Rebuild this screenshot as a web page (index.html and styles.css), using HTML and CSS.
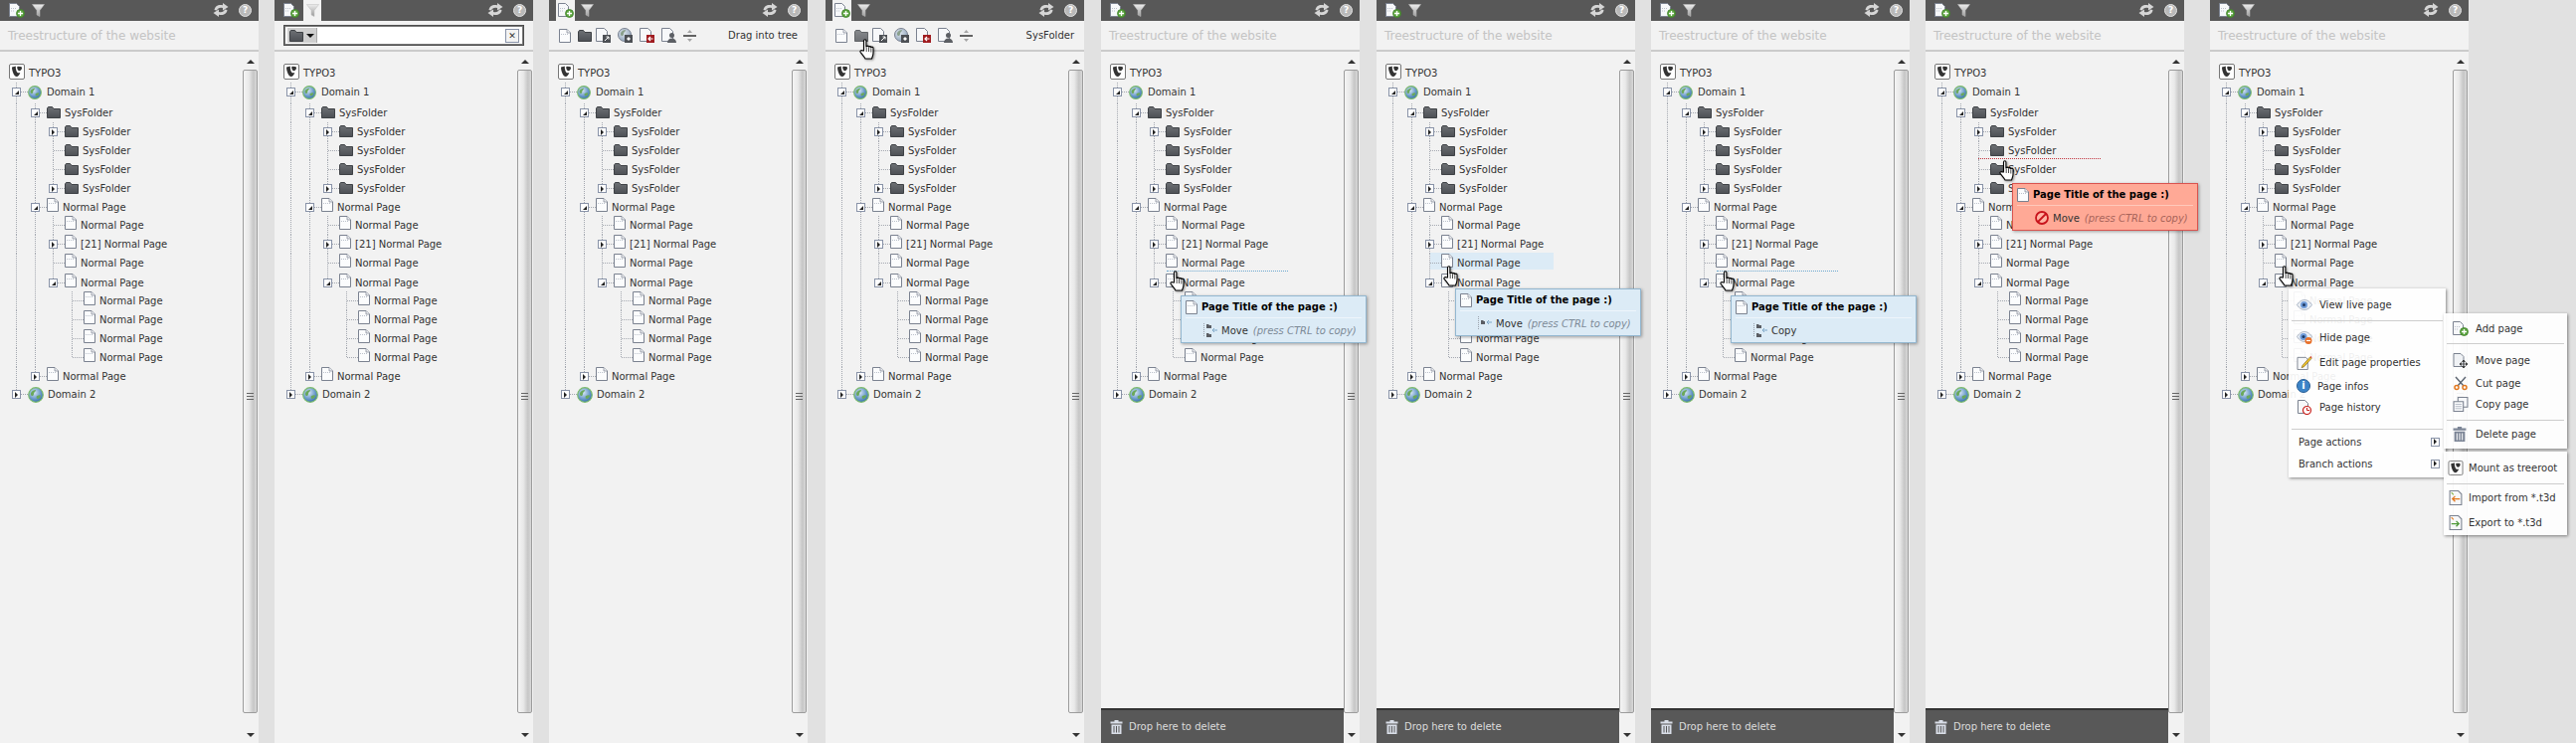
FILE: index.html
```html
<!DOCTYPE html>
<html lang="en">
<head>
    <meta charset="UTF-8">
    <title>Page tree states</title>
    <link rel="stylesheet" href="styles.css">
</head>
<body>
    <svg class="defs" xmlns="http://www.w3.org/2000/svg">
        <defs>
            <linearGradient id="g-folder" x1="0" y1="0" x2="0" y2="1"><stop offset="0" stop-color="#6e7175"/><stop offset="1" stop-color="#4d5055"/></linearGradient>
            <linearGradient id="g-filter" x1="0" y1="0" x2="0" y2="1"><stop offset="0" stop-color="#ededed"/><stop offset="1" stop-color="#9a9a9a"/></linearGradient>
            <radialGradient id="g-globe" cx=".4" cy=".35" r=".7"><stop offset="0" stop-color="#d7e6f3"/><stop offset=".6" stop-color="#6d9ccb"/><stop offset="1" stop-color="#2f6aa8"/></radialGradient>
            <radialGradient id="g-globe-dim" cx=".4" cy=".35" r=".7"><stop offset="0" stop-color="#dfe6ee"/><stop offset="1" stop-color="#8ea3ba"/></radialGradient>
        </defs>
        <symbol id="i-page" viewBox="0 0 12 14"><path d="M.5.5h7.5l3.500 3.500v9.500H.5z" fill="#fbfcfd" stroke="#7b8290"/><path d="M8 .5V4h3.500" fill="#eef0f3" stroke="#7b8290" stroke-width=".7"/><path d="M2 5.500h7" stroke="#bcc2cc" stroke-dasharray="1 1"/></symbol>
        <symbol id="i-folder" viewBox="0 0 14 12"><path d="M.5 11.500V2L1.500.5h4L7 2.500h6.500v9z" fill="url(#g-folder)" stroke="#3f4246"/></symbol>
        <symbol id="i-globe" viewBox="0 0 16 16"><circle cx="8" cy="8" r="7.300" fill="url(#g-globe)" stroke="#7cbb6c" stroke-width="1.200"/><path d="M3 6c1-2 3-3 5-3 0 2-2 2-2 4s-2 3-3 1zM9 9c2-1 4-1 4 0s-2 3-3 3-2-2-1-3z" fill="#6aa85c"/></symbol>
        <symbol id="i-typo3" viewBox="0 0 16 16"><rect x=".5" y=".5" width="15" height="15" rx="1.500" fill="#fff" stroke="#777"/><path d="M3 3.500c0 3.500 2 9.500 4.700 9.500 1.600 0 3-2 3.600-4-.8.3-1.400.3-1.800.3C8 9.300 6.800 6 6.800 3.400c0-.5 0-.8.2-.9zM9 2.800c-.5.1-.8.4-.8 1.100 0 1.300 1.200 3.400 2.400 3.400.9 0 2.400-1.400 2.400-3 0-.8-.4-1.200-1-1.400z" fill="#333"/></symbol>
        <symbol id="i-add" viewBox="0 0 16 15"><path d="M.5.500h7l3 3v10H.5z" fill="#f7f8fa" stroke="#7b8290"/><path d="M2 5.500h6M2 8h4" stroke="#bcc2cc" stroke-dasharray="1 1"/><circle cx="11.500" cy="10.500" r="4" fill="#5da53f" stroke="#3d7f2a" stroke-width=".8"/><path d="M11.500 8v5M9 10.500h5" stroke="#fff" stroke-width="1.300"/></symbol>
        <symbol id="i-filter" viewBox="0 0 13 13"><path d="M.5.5h12L8 6.500v6L5 11V6.500z" fill="url(#g-filter)" stroke="#bdbdbd" stroke-width=".5"/></symbol>
        <symbol id="i-refresh" viewBox="0 0 16 14"><path d="M1.500 7C2 3 6 1 10 2.300V0l5.500 4L10 7.500V5C7 4.300 5 5 4 7.500zM14.500 7c-.5 4-4.500 6-8.500 4.700V14L.5 10 6 6.500V9c3 .7 5 0 6-2.500z" fill="#d6d6d6"/></symbol>
        <symbol id="i-trash" viewBox="0 0 13 14"><path d="M4.500 0h4v1.500h4v2H.5v-2h4z" fill="currentColor"/><path fill-rule="evenodd" d="M1.500 4.500h10V14h-10zM3.500 6v6.500h1V6zM6 6v6.500h1V6zM8.500 6v6.500h1V6z" fill="currentColor"/></symbol>
        <symbol id="i-link-page" viewBox="0 0 15 15"><path d="M.5.500h8l3 3v10H.5z" fill="#f7f8fa" stroke="#7b8290"/><rect x="7" y="7" width="8" height="8" fill="#4d5055"/><path d="M9 13l4-4M10.500 9H13v2.500" stroke="#fff" fill="none"/></symbol>
        <symbol id="i-link-globe" viewBox="0 0 15 15"><circle cx="7" cy="7" r="6.500" fill="url(#g-globe-dim)" stroke="#7b8290"/><path d="M3 5c1-2 3-3 5-3 0 2-2 2-2 4s-2 3-3 1z" fill="#8aa08c"/><rect x="7" y="7" width="8" height="8" fill="#4d5055"/><path d="M9 11l2-2 2 2-2 2z" fill="#fff"/></symbol>
        <symbol id="i-back-page" viewBox="0 0 15 15"><path d="M.5.500h8l3 3v10H.5z" fill="#f7f8fa" stroke="#7b8290"/><rect x="7" y="7" width="8" height="8" fill="#a01c20"/><path d="M13.500 11H9M11 9l-2 2 2 2" stroke="#fff" fill="none" stroke-width="1.200"/></symbol>
        <symbol id="i-user-page" viewBox="0 0 15 15"><path d="M.5.500h8l3 3v10H.5z" fill="#f7f8fa" stroke="#7b8290"/><circle cx="10.500" cy="7.500" r="2.500" fill="#5c5f64"/><path d="M6 15c0-3 2-4.500 4.500-4.500S15 12 15 15z" fill="#5c5f64"/></symbol>
        <symbol id="i-divider" viewBox="0 0 13 14"><path d="M0 7h13" stroke="#333" stroke-width="1.500"/><path d="M6.500 1l2.500 3H4zM6.500 13L9 10H4z" fill="#a5a5a5"/></symbol>
        <symbol id="i-hand" viewBox="0 0 16 21"><path d="M4.500 12V2a1.200 1.200 0 0 1 2.400 0v6h.3a1.200 1.200 0 0 1 2.300 0v.5a1.200 1.200 0 0 1 2.300 0v.7a1.100 1.100 0 0 1 2.200 0V14c0 3-1 4-1.500 6H6c-1-2-3-4-4.800-6.500-.8-1.200.8-2.600 2-1.500z" fill="#fff" stroke="#000" stroke-width="1.100"/><path d="M7.200 9v4M9.500 9v4M11.800 9.500v4" stroke="#000" stroke-width=".7"/></symbol>
        <symbol id="i-move-two" viewBox="0 0 14 14"><path d="M.5 0v14" stroke="#9aa0aa" stroke-dasharray="1 1"/><path d="M3 1h2l1 1h2v3H3zM3 10h2l1 1h2v3H3z" fill="#5a5d63"/><path d="M14 7H9M11 5L9 7l2 2" stroke="#7fa8c8" fill="none"/></symbol>
        <symbol id="i-move-one" viewBox="0 0 14 14"><path d="M.5 0v14" stroke="#9aa0aa" stroke-dasharray="1 1"/><path d="M3 4h2l1 1h1v3H3z" fill="#5a5d63"/><path d="M14 6H9M11 4L9 6l2 2" stroke="#7fa8c8" fill="none"/></symbol>
        <symbol id="i-deny" viewBox="0 0 14 14"><circle cx="7" cy="7" r="6" fill="#ffb5a4" stroke="#c8141c" stroke-width="1.800"/><path d="M3 11l8-8" stroke="#c8141c" stroke-width="1.800"/></symbol>
        <symbol id="i-eye" viewBox="0 0 16 12"><path d="M.5 6C3 2 6 1 8 1s5 1 7.500 5C13 10 10 11 8 11S3 10 .5 6z" fill="#e8edf4" stroke="#a8b2c2"/><circle cx="7.500" cy="6" r="3.500" fill="#6f9bd8"/><circle cx="7.500" cy="6" r="1.500" fill="#1f3a63"/></symbol>
        <symbol id="i-eye-hide" viewBox="0 0 16 14"><path d="M.5 6C3 2 6 1 8 1s5 1 7.500 5C13 10 10 11 8 11S3 10 .5 6z" fill="#e8edf4" stroke="#a8b2c2"/><circle cx="7" cy="6" r="3.500" fill="#6f9bd8"/><circle cx="7" cy="6" r="1.500" fill="#1f3a63"/><circle cx="12" cy="10" r="3.500" fill="#e8702a"/><path d="M10 10h4" stroke="#fff" stroke-width="1.200"/></symbol>
        <symbol id="i-edit" viewBox="0 0 16 16"><path d="M.5 2.500h9l2 2v11H.5z" fill="#f7f8fa" stroke="#7b8290"/><path d="M6 11l8-9 1.500 1.500-8 9L5 13.500z" fill="#f2c92e" stroke="#7a5a10" stroke-width=".7"/><path d="M14 2l1.500 1.500 .5-1L15 1z" fill="#d8352a"/></symbol>
        <symbol id="i-history" viewBox="0 0 14 15"><path d="M.5.500h7l3 3v10H.5z" fill="#f7f8fa" stroke="#7b8290"/><circle cx="9.500" cy="10.500" r="4" fill="#fff" stroke="#c8201c" stroke-width="1.200"/><path d="M9.500 8v2.500H12" stroke="#c8201c" fill="none"/></symbol>
        <symbol id="i-move-page" viewBox="0 0 15 15"><path d="M.5.500h7l3 3v10H.5z" fill="#f0f2f5" stroke="#7b8290"/><path d="M10.500 7v8M6.500 11h8M10.500 7L9 8.500h3zM10.500 15L9 13.500h3zM6.500 11L8 9.500v3zM14.500 11L13 9.500v3z" stroke="#333" stroke-width=".7" fill="#333"/></symbol>
        <symbol id="i-cut" viewBox="0 0 16 13"><path d="M3 0l8 9M13 0L5 9" stroke="#5c6470" stroke-width="1.400"/><circle cx="4" cy="10.500" r="2" fill="none" stroke="#e2781e" stroke-width="1.500"/><circle cx="12" cy="10.500" r="2" fill="none" stroke="#e2781e" stroke-width="1.500"/></symbol>
        <symbol id="i-copy" viewBox="0 0 14 14"><path d="M4.500.5h9v9h-9z" fill="#f7f8fa" stroke="#7b8290"/><path d="M.5 4.500h9v9h-9z" fill="#f7f8fa" stroke="#7b8290"/><path d="M2 7h6M2 9h6M2 11h6" stroke="#a8aebb" stroke-width=".7"/></symbol>
        <symbol id="i-import" viewBox="0 0 12 14"><path d="M.5.500h8l3 3v10H.5z" fill="#f7f8fa" stroke="#7b8290"/><path d="M10 8H3M5.500 5.500L3 8l2.500 2.500" stroke="#e2781e" fill="none" stroke-width="1.200"/><path d="M2 2l2 2" stroke="#7fae3c"/></symbol>
        <symbol id="i-export" viewBox="0 0 12 14"><path d="M.5.500h8l3 3v10H.5z" fill="#f7f8fa" stroke="#7b8290"/><path d="M2 8h7M6.500 5.500L9 8l-2.500 2.500" stroke="#4f9a3a" fill="none" stroke-width="1.200"/><path d="M2 2l2 2" stroke="#e2781e"/></symbol>
    </svg>

    <main class="board">
        <!-- default -->
        <section class="panel">
            <div class="topbar"></div>
            <div class="subbar"><span class="subbar-hint">Treestructure of the website</span></div>
            <div class="body"><div class="tree-col"><div class="tree"></div></div><div class="scroll"></div></div>
        </section>

        <!-- filter open -->
        <section class="panel" data-tab="filter">
            <div class="topbar"></div>
            <div class="subbar">
                <div class="search">
                    <span class="search-type"><svg class="i-search-folder"><use href="#i-folder"/></svg><span class="arrow-down"></span></span>
                    <span class="search-clear">&#x2715;</span>
                </div>
            </div>
            <div class="body"><div class="tree-col"><div class="tree"></div></div><div class="scroll"></div></div>
        </section>

        <!-- new page toolbar -->
        <section class="panel" data-tab="add">
            <div class="topbar"></div>
            <div class="subbar drag-tools">
                <svg class="i-page"><use href="#i-page"/></svg>
                <svg class="i-folder"><use href="#i-folder"/></svg>
                <svg class="i-tool tool-link"><use href="#i-link-page"/></svg>
                <svg class="i-tool"><use href="#i-link-globe"/></svg>
                <svg class="i-tool"><use href="#i-back-page"/></svg>
                <svg class="i-tool"><use href="#i-user-page"/></svg>
                <svg class="i-tool i-divider"><use href="#i-divider"/></svg>
                <span class="drag-label">Drag into tree</span>
            </div>
            <div class="body"><div class="tree-col"><div class="tree"></div></div><div class="scroll"></div></div>
        </section>

        <section class="panel" data-tab="add">
            <div class="topbar"></div>
            <div class="subbar drag-tools">
                <svg class="i-page"><use href="#i-page"/></svg>
                <svg class="i-folder tool-dragged"><use href="#i-folder"/></svg>
                <svg class="i-tool tool-link"><use href="#i-link-page"/></svg>
                <svg class="i-tool"><use href="#i-link-globe"/></svg>
                <svg class="i-tool"><use href="#i-back-page"/></svg>
                <svg class="i-tool"><use href="#i-user-page"/></svg>
                <svg class="i-tool i-divider"><use href="#i-divider"/></svg>
                <span class="drag-label">SysFolder</span>
            </div>
            <div class="body"><div class="tree-col"><div class="tree"></div></div><div class="scroll"></div></div>
            <svg class="hand hand-tool"><use href="#i-hand"/></svg>
        </section>

        <!-- dragging between rows -->
        <section class="panel">
            <div class="topbar"></div>
            <div class="subbar"><span class="subbar-hint">Treestructure of the website</span></div>
            <div class="body">
                <div class="tree-col">
                    <div class="tree"></div>
                    <div class="dock"><svg class="i-trash"><use href="#i-trash"/></svg>Drop here to delete</div>
                </div>
                <div class="scroll"></div>
            </div>
            <div class="drop-line line-blue"></div>
            <svg class="hand hand-between"><use href="#i-hand"/></svg>
            <div class="tip tip-between">
                <div class="tip-title"><svg class="i-page"><use href="#i-page"/></svg>Page Title of the page :)</div>
                <div class="tip-action"><svg class="i-action"><use href="#i-move-two"/></svg>Move<em>(press CTRL to copy)</em></div>
            </div>
        </section>

        <!-- dragging onto a row -->
        <section class="panel">
            <div class="topbar"></div>
            <div class="subbar"><span class="subbar-hint">Treestructure of the website</span></div>
            <div class="body">
                <div class="tree-col">
                    <div class="tree"></div>
                    <div class="dock"><svg class="i-trash"><use href="#i-trash"/></svg>Drop here to delete</div>
                </div>
                <div class="scroll"></div>
            </div>
            <div class="row-mark"></div>
            <svg class="hand hand-onto"><use href="#i-hand"/></svg>
            <div class="tip tip-onto">
                <div class="tip-title"><svg class="i-page"><use href="#i-page"/></svg>Page Title of the page :)</div>
                <div class="tip-action"><svg class="i-action"><use href="#i-move-one"/></svg>Move<em>(press CTRL to copy)</em></div>
            </div>
        </section>

        <!-- copy -->
        <section class="panel">
            <div class="topbar"></div>
            <div class="subbar"><span class="subbar-hint">Treestructure of the website</span></div>
            <div class="body">
                <div class="tree-col">
                    <div class="tree"></div>
                    <div class="dock"><svg class="i-trash"><use href="#i-trash"/></svg>Drop here to delete</div>
                </div>
                <div class="scroll"></div>
            </div>
            <div class="drop-line line-blue"></div>
            <svg class="hand hand-between"><use href="#i-hand"/></svg>
            <div class="tip tip-between">
                <div class="tip-title"><svg class="i-page"><use href="#i-page"/></svg>Page Title of the page :)</div>
                <div class="tip-action"><svg class="i-action"><use href="#i-move-two"/></svg>Copy</div>
            </div>
        </section>

        <!-- not allowed -->
        <section class="panel">
            <div class="topbar"></div>
            <div class="subbar"><span class="subbar-hint">Treestructure of the website</span></div>
            <div class="body">
                <div class="tree-col">
                    <div class="tree"></div>
                    <div class="dock"><svg class="i-trash"><use href="#i-trash"/></svg>Drop here to delete</div>
                </div>
                <div class="scroll"></div>
            </div>
            <div class="drop-line line-red"></div>
            <svg class="hand hand-denied"><use href="#i-hand"/></svg>
            <div class="tip tip-denied">
                <div class="tip-title"><svg class="i-page"><use href="#i-page"/></svg>Page Title of the page :)</div>
                <div class="tip-action"><svg class="i-action"><use href="#i-deny"/></svg>Move<em>(press CTRL to copy)</em></div>
            </div>
        </section>

        <!-- context menu -->
        <section class="panel">
            <div class="topbar"></div>
            <div class="subbar"><span class="subbar-hint">Treestructure of the website</span></div>
            <div class="body"><div class="tree-col"><div class="tree"></div></div><div class="scroll"></div></div>
            <svg class="hand hand-menu"><use href="#i-hand"/></svg>

            <div class="menu menu-main">
                <div class="mi h-32"><svg class="mi-icon"><use href="#i-eye"/></svg>View live page</div>
                <hr class="sep">
                <div class="mi h-24 after-sep"><svg class="mi-icon"><use href="#i-eye-hide"/></svg>Hide page</div>
                <div class="mi h-24 next-1"><svg class="mi-icon"><use href="#i-edit"/></svg>Edit page properties</div>
                <div class="mi h-24"><span class="info-badge">i</span>Page infos</div>
                <div class="mi h-18"><svg class="mi-icon"><use href="#i-history"/></svg>Page history</div>
                <hr class="sep sep-low">
                <div class="mi mi-sub h-24">Page actions<span class="exp exp-closed"></span></div>
                <div class="mi mi-sub h-20">Branch actions<span class="exp exp-closed"></span></div>
            </div>

            <div class="menu menu-page">
                <div class="mi h-30"><svg class="mi-icon"><use href="#i-add"/></svg>Add page</div>
                <hr class="sep">
                <div class="mi h-24 after-sep"><svg class="mi-icon"><use href="#i-move-page"/></svg>Move page</div>
                <div class="mi h-22"><svg class="mi-icon"><use href="#i-cut"/></svg>Cut page</div>
                <div class="mi h-20"><svg class="mi-icon"><use href="#i-copy"/></svg>Copy page</div>
                <hr class="sep sep-mid">
                <div class="mi h-26"><svg class="mi-icon mi-trash"><use href="#i-trash"/></svg>Delete page</div>
            </div>

            <div class="menu menu-branch">
                <div class="mi h-32"><svg class="mi-icon"><use href="#i-typo3"/></svg>Mount as treeroot</div>
                <hr class="sep">
                <div class="mi h-26"><svg class="mi-icon"><use href="#i-import"/></svg>Import from *.t3d</div>
                <div class="mi h-24"><svg class="mi-icon"><use href="#i-export"/></svg>Export to *.t3d</div>
            </div>
        </section>
    </main>
    <script src="script.js"></script>
</body>
</html>
```

FILE: styles.css
```css
* {
    box-sizing: border-box;
}
body {
    margin: 0;
    height: 747px;
    overflow: hidden;
    background-color: #e1e1e1;
    font-family: "DejaVu Sans", Verdana, sans-serif;
    font-size: 10px;
    color: #333;
}
.defs {
    position: absolute;
    width: 0;
    height: 0;
}
svg {
    display: block;
    flex: none;
}

.board {
    display: grid;
    grid-template-columns: 276px 276px 278px 277px 277px 276px 276px 286px 368px;
    height: 747px;
}
.panel {
    position: relative;
    display: flex;
    flex-direction: column;
    width: 260px;
    height: 747px;
    background-color: #f2f2f2;
}

/* top bar */
.topbar {
    display: flex;
    flex: none;
    height: 21px;
    padding: 0 7px;
    gap: 3px;
    background-color: #585858;
}
.tab {
    display: flex;
    align-items: center;
    justify-content: center;
    width: 19px;
}
.tab + .tab {
    width: 18px;
}
.tab-active {
    background-color: #f2f2f2;
}
.i-add {
    width: 16px;
    height: 15px;
}
.i-filter {
    width: 13px;
    height: 13px;
}
.i-refresh {
    width: 16px;
    height: 14px;
    margin: 3px 7px 0 auto;
}
.i-help {
    width: 13px;
    height: 13px;
    margin-top: 4px;
    border: 1px solid #e4e4e4;
    border-radius: 50%;
    background-color: #b9b9b9;
    color: #fff;
    font-size: 9px;
    font-weight: 700;
    line-height: 11px;
    text-align: center;
}

/* bar under the top bar */
.subbar {
    display: flex;
    flex: none;
    align-items: center;
    height: 31px;
    border-bottom: 2px solid #cbcbcb;
    padding-left: 8px;
}
.subbar-hint {
    color: #c4c4c4;
    font-size: 12px;
}
.search {
    display: flex;
    align-items: center;
    justify-content: space-between;
    width: 242px;
    height: 21px;
    margin-left: 1px;
    border: 1px solid #4d4d4d;
    outline: 1px solid #777;
    outline-offset: -2px;
    padding: 0 4px 0 3px;
    background-color: #fff;
}
.search-type {
    display: flex;
    align-items: center;
    gap: 3px;
    width: 30px;
    height: 15px;
    padding-left: 2px;
    background-color: #cfcfcf;
    border-right: 1px solid #aaa;
}
.i-search-folder {
    width: 14px;
    height: 12px;
}
.arrow-down {
    border-top: 4px solid #111;
    border-left: 4px solid transparent;
    border-right: 4px solid transparent;
}
.search-clear {
    width: 14px;
    height: 14px;
    border: 1px solid #8993a8;
    background-color: #f3f3f3;
    color: #333;
    font-size: 9px;
    line-height: 12px;
    text-align: center;
}
.drag-tools {
    padding-left: 10px;
    gap: 7px;
}
.i-page {
    width: 12px;
    height: 14px;
}
.i-folder {
    width: 14px;
    height: 12px;
}
.tool-dragged {
    opacity: 0.8;
}
.i-tool {
    width: 15px;
    height: 15px;
}
.tool-link {
    margin-left: -3px;
}
.i-divider {
    width: 13px;
    height: 14px;
}
.drag-label {
    margin-left: auto;
    margin-right: 10px;
}

/* tree */
.body {
    position: relative;
    z-index: 1;
    display: flex;
    flex: 1;
    min-height: 0;
}
.tree-col {
    display: flex;
    flex-direction: column;
    width: 244px;
}
.tree {
    flex: 1;
    padding-top: 12px;
}
.row {
    display: flex;
    padding-left: 12px;
    line-height: 19px;
    white-space: nowrap;
}
.row-root {
    padding-left: 9px;
}
.guide,
.branch {
    flex: none;
    height: 100%;
    background-repeat: no-repeat;
}
.guide {
    width: 19px;
}
.guide:nth-child(2) {
    width: 18px;
}
.guide-line {
    background-image: repeating-linear-gradient(to bottom, #a4a8b0 0 1px, transparent 1px 2px);
    background-size: 1px 100%;
    background-position: 4px 0;
}
.branch {
    width: 16px;
    padding-top: 5px;
    background-image:
        repeating-linear-gradient(to bottom, #a4a8b0 0 1px, transparent 1px 2px),
        repeating-linear-gradient(to right, #a4a8b0 0 1px, transparent 1px 2px);
    background-size: 1px 100%, 11px 1px;
    background-position: 4px 0, 5px 9px;
}
.branch-end {
    background-size: 1px 10px, 11px 1px;
}
.exp {
    display: flex;
    align-items: center;
    justify-content: center;
    width: 9px;
    height: 9px;
    border: 1px solid #8993a8;
    background-color: #fff;
}
.exp::after {
    content: "";
}
.exp-closed::after {
    border-left: 3px solid #222;
    border-top: 3px solid transparent;
    border-bottom: 3px solid transparent;
}
.exp-open {
    align-items: flex-end;
    justify-content: flex-end;
    padding: 0 1px 1px 0;
}
.exp-open::after {
    border-bottom: 4px solid #222;
    border-left: 4px solid transparent;
}
.node-page {
    width: 12px;
    height: 14px;
}
.node-folder {
    width: 14px;
    height: 12px;
    margin-top: 3px;
}
.node-globe {
    width: 14px;
    height: 14px;
    margin: 3px 1px 0 0;
}
.node-globe-big {
    width: 16px;
    height: 16px;
    margin-top: 2px;
}
.node-typo3 {
    width: 16px;
    height: 16px;
}
.label {
    margin-left: 4px;
}

/* scrollbar */
.scroll {
    display: flex;
    flex-direction: column;
    width: 16px;
}
.scroll-up,
.scroll-down {
    flex: none;
    width: 15px;
    display: flex;
    justify-content: center;
}
.scroll-up {
    height: 18px;
    padding-top: 8px;
}
.scroll-down {
    height: 30px;
    padding-top: 20px;
}
.scroll-up::after {
    content: "";
    height: 0;
    border-bottom: 4px solid #333;
    border-left: 4px solid transparent;
    border-right: 4px solid transparent;
}
.scroll-down::after {
    content: "";
    height: 0;
    border-top: 4px solid #333;
    border-left: 4px solid transparent;
    border-right: 4px solid transparent;
}
.scroll-thumb {
    display: flex;
    flex: 1;
    align-items: center;
    justify-content: center;
    width: 15px;
    padding-top: 10px;
    border: 1px solid #9c9c9c;
    border-radius: 2px;
    background: linear-gradient(to right, #f4f4f4, #e9e9e9 40%, #c6c6c6 75%, #d8d8d8);
}
.scroll-grip {
    width: 7px;
    height: 7px;
    background: repeating-linear-gradient(to bottom, #666 0 1px, transparent 1px 3px);
}

/* delete dock */
.dock {
    display: flex;
    flex: none;
    align-items: center;
    gap: 6px;
    height: 35px;
    padding-left: 9px;
    border-top: 2px solid #333;
    background-color: #585858;
    color: #dcdcdc;
}
.i-trash {
    width: 13px;
    height: 14px;
    color: #d9dee8;
}

/* things lying over the tree */
.row-mark {
    position: absolute;
    left: 54px;
    top: 254px;
    width: 124px;
    height: 17px;
    background-color: #dcebf6;
}
.drop-line {
    position: absolute;
    z-index: 2;
    border-top: 1px dotted #6fa8d0;
}
.line-blue {
    left: 66px;
    top: 272px;
    width: 122px;
}
.line-red {
    left: 53px;
    top: 159px;
    width: 123px;
    border-top-color: #c0303a;
}
.hand {
    position: absolute;
    z-index: 4;
    width: 16px;
    height: 21px;
    filter: drop-shadow(1px 1px 1px rgba(0, 0, 0, 0.4));
}
.hand-tool { left: 34px; top: 39px; }
.hand-between { left: 69px; top: 272px; }
.hand-onto { left: 67px; top: 267px; }
.hand-denied { left: 74px; top: 161px; }
.hand-menu { left: 69px; top: 267px; }

.tip {
    position: absolute;
    z-index: 3;
    width: 187px;
    height: 48px;
    padding: 0 4px;
    border: 1px solid #93b7d0;
    background-color: #dcebf6;
    box-shadow: 1px 1px 3px rgba(0, 0, 0, 0.35);
}
.tip-between { left: 80px; top: 297px; }
.tip-onto { left: 79px; top: 290px; }
.tip-denied {
    left: 87px;
    top: 184px;
    border-color: #d9534f;
    background-color: #ffa996;
}
.tip-denied .tip-action em {
    color: #a8645a;
}
.tip-title {
    display: flex;
    align-items: center;
    gap: 4px;
    height: 22px;
    border-bottom: 1px solid #eef5fb;
    color: #000;
    font-weight: 700;
}
.tip-denied .tip-title {
    border-bottom-color: #ffc9bb;
}
.tip-action {
    display: flex;
    align-items: center;
    height: 24px;
    padding-left: 18px;
}
.i-action {
    width: 14px;
    height: 14px;
    margin-right: 4px;
}
.tip-action em {
    margin-left: 5px;
    color: #7d8a96;
}

.menu {
    position: absolute;
    z-index: 3;
    background-color: rgba(255, 255, 255, 0.92);
    box-shadow: 1px 1px 3px rgba(0, 0, 0, 0.45);
}
.menu-main {
    left: 79px;
    top: 290px;
    width: 158px;
    height: 190px;
}
.menu-page {
    left: 235px;
    top: 315px;
    width: 124px;
    height: 136px;
}
.menu-branch {
    left: 235px;
    top: 454px;
    width: 124px;
    height: 84px;
}
.mi {
    display: flex;
    align-items: center;
    padding: 0 6px 0 8px;
    white-space: nowrap;
}
.mi-icon {
    width: 16px;
    height: 15px;
    margin-right: 7px;
}
.info-badge {
    width: 14px;
    height: 14px;
    margin-right: 7px;
    border: 1px solid #2a5f95;
    border-radius: 50%;
    background-color: #3c84c8;
    color: #fff;
    font-size: 10px;
    font-weight: 700;
    line-height: 12px;
    text-align: center;
}
.mi-trash {
    color: #7c8596;
    width: 14px;
    margin-right: 9px;
}
.mi-sub {
    padding-left: 10px;
    justify-content: space-between;
}
.menu-page .mi {
    padding-left: 9px;
}
.menu-branch .mi {
    padding-left: 4px;
}
.menu-branch .mi-icon {
    margin-right: 5px;
}
.h-18 { height: 18px; }
.h-20 { height: 20px; }
.h-22 { height: 22px; }
.h-24 { height: 24px; }
.h-26 { height: 26px; }
.h-30 { height: 30px; }
.h-32 { height: 32px; }
.after-sep {
    margin-top: 4px;
}
.next-1 {
    margin-top: 1px;
}
.sep {
    height: 1px;
    margin: 0 3px;
    border: 0;
    background-color: #cdcdcd;
}
.sep-low {
    margin-top: 13px;
}
.sep-mid {
    margin-top: 6px;
}
```

FILE: script.js
```js
const Normal = { label: "Normal Page", icon: "page" };
const Folder = { label: "SysFolder", icon: "folder" };

const TREE = {
    label: "TYPO3", icon: "typo3",
    children: [
        {
            label: "Domain 1", icon: "globe", open: true,
            children: [
                {
                    label: "SysFolder", icon: "folder", open: true,
                    children: [{ ...Folder, closed: true }, Folder, Folder, { ...Folder, closed: true }]
                },
                {
                    label: "Normal Page", icon: "page", open: true,
                    children: [
                        Normal,
                        { label: "[21] Normal Page", icon: "page", closed: true },
                        Normal,
                        { label: "Normal Page", icon: "page", open: true, children: [Normal, Normal, Normal, Normal] }
                    ]
                },
                { ...Normal, closed: true }
            ]
        },
        { label: "Domain 2", icon: "globe-big", closed: true }
    ]
};

// distance from each row to the next one, the rows are not evenly spaced
const ROW_HEIGHTS = [19, 21, 19, 19, 19, 19, 19, 18, 19, 19, 20, 18, 19, 19, 19, 19, 18, 19];

function svgIcon(name, className) {
    return `<svg class="${className}"><use href="#i-${name}"/></svg>`;
}

function treeRows(node, prefix, isLast, rows) {
    let html = prefix.map(line => `<span class="guide ${line ? "guide-line" : ""}"></span>`).join("");
    if (rows.length > 0) {
        let expander = "";
        if (node.open) expander = '<span class="exp exp-open"></span>';
        if (node.closed) expander = '<span class="exp exp-closed"></span>';
        html += `<span class="branch ${isLast ? "branch-end" : ""}">${expander}</span>`;
    }
    const symbol = node.icon === "globe-big" ? "globe" : node.icon;
    html += svgIcon(symbol, "node-" + node.icon);
    html += `<span class="label">${node.label}</span>`;

    const rootClass = rows.length === 0 ? "row-root" : "";
    rows.push(`<div class="row ${rootClass}" style="height:${ROW_HEIGHTS[rows.length]}px">${html}</div>`);

    const kids = node.children || [];
    const childPrefix = rows.length === 1 ? [] : prefix.concat(!isLast);
    kids.forEach((kid, i) => treeRows(kid, childPrefix, i === kids.length - 1, rows));
    return rows;
}

document.querySelectorAll(".panel").forEach(panel => {
    const active = panel.dataset.tab;
    panel.querySelector(".topbar").innerHTML = `
        <span class="tab ${active === "add" ? "tab-active" : ""}">${svgIcon("add", "i-add")}</span>
        <span class="tab ${active === "filter" ? "tab-active" : ""}">${svgIcon("filter", "i-filter")}</span>
        ${svgIcon("refresh", "i-refresh")}
        <span class="i-help">?</span>`;
    panel.querySelector(".tree").innerHTML = treeRows(TREE, [], true, []).join("");
    panel.querySelector(".scroll").innerHTML = `
        <span class="scroll-up"></span>
        <span class="scroll-thumb"><span class="scroll-grip"></span></span>
        <span class="scroll-down"></span>`;
});
```
